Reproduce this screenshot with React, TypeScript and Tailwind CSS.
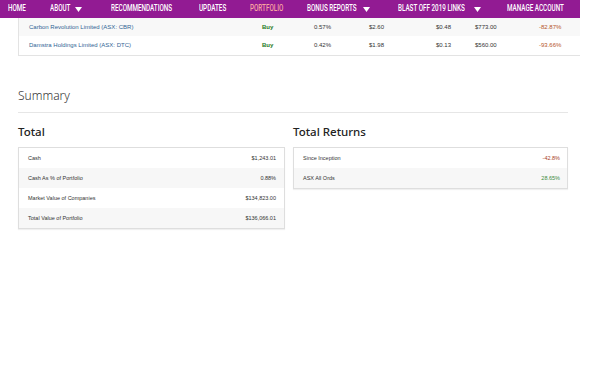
import React from "react";

const navItems = [
  { label: "HOME", ml: 8, w: 18 },
  { label: "ABOUT", ml: 24, w: 20, caret: true },
  { label: "RECOMMENDATIONS", ml: 29, w: 62 },
  { label: "UPDATES", ml: 26, w: 28 },
  { label: "PORTFOLIO", ml: 23, w: 35, active: true },
  { label: "BONUS REPORTS", ml: 22, w: 51, caret: true },
  { label: "BLAST OFF 2019 LINKS", ml: 28, w: 71, caret: true },
  { label: "MANAGE ACCOUNT", ml: 26, w: 60 },
];

const holdings = [
  { name: "Carbon Revolution Limited (ASX: CBR)", pct: "0.57%", buy: "$2.60", price: "$0.48", value: "$773.00", ret: "-82.87%" },
  { name: "Damstra Holdings Limited (ASX: DTC)", pct: "0.42%", buy: "$1.98", price: "$0.13", value: "$560.00", ret: "-93.66%" },
];

const totals = [
  { label: "Cash", value: "$1,243.01" },
  { label: "Cash As % of Portfolio", value: "0.88%" },
  { label: "Market Value of Companies", value: "$134,823.00" },
  { label: "Total Value of Portfolio", value: "$136,066.01" },
];

const returns = [
  { label: "Since Inception", value: "-42.8%", color: "text-[#a8411d]" },
  { label: "ASX All Ords", value: "28.65%", color: "text-[#3d8a3d]" },
];

function Caret() {
  return (
    <svg width="7" height="5" viewBox="0 0 7 5" className="ml-[5px] shrink-0">
      <path d="M0 0h7L3.5 5z" fill="#ffffff" />
    </svg>
  );
}

export default function App() {
  return (
    <div className="h-[382px] w-[600px] bg-white font-['Liberation_Sans',sans-serif] text-[#333]">
      {/* nav */}
      <div className="flex h-[18px] w-[580px] items-center overflow-hidden bg-[#921b93] font-['Roboto',sans-serif] text-[9px] font-medium">
        {navItems.map((item) => (
          <div key={item.label} className="flex shrink-0 items-center" style={{ marginLeft: item.ml }}>
            <span className="inline-block shrink-0" style={{ width: item.w }}>
              <span
                className={
                  "inline-block origin-left scale-x-[0.7] whitespace-nowrap " +
                  (item.active ? "text-[#f8a3a0]" : "text-white")
                }
              >
                {item.label}
              </span>
            </span>
            {item.caret && <Caret />}
          </div>
        ))}
      </div>

      {/* holdings rows */}
      <div className="ml-[18px] w-[562px] border-b border-l border-[#e3e3e3] text-[6px]">
        {holdings.map((h, i) => (
          <div
            key={h.name}
            className={
              "grid grid-cols-[243px_52px_55px_50px_56px_64px_1fr] items-center " +
              (i % 2 === 0 ? "h-[18px] bg-[#f8f8f8]" : "h-[19px] bg-white")
            }
          >
            <span className="pl-[10px] text-[#2f6495]">{h.name}</span>
            <span className="font-bold text-[#1d7a24]">Buy</span>
            <span>{h.pct}</span>
            <span>{h.buy}</span>
            <span className="pr-[24px] text-right">{h.price}</span>
            <span>{h.value}</span>
            <span className="pr-[20px] text-right text-[#b5532a]">{h.ret}</span>
          </div>
        ))}
      </div>

      {/* summary */}
      <div className="mx-[18px] mt-[31px] w-[550px]">
        <div className="border-b border-[#e6e6e6] pb-[7px] font-['Noto_Sans',sans-serif] text-[12px] font-light leading-[18px] text-[#333]">
          Summary
        </div>

        <div className="mt-[10px] flex gap-[8px]">
          <div className="w-[267px]">
            <div className="font-['Noto_Sans',sans-serif] text-[11.5px] font-medium leading-[18px] text-[#222]">Total</div>
            <div className="mt-[6px] border border-[#dedede] text-[5.5px] shadow-[0_1px_1px_rgba(0,0,0,0.06)]">
              {totals.map((t, i) => (
                <div
                  key={t.label}
                  className={
                    "flex h-[20px] items-center justify-between pl-[9px] pr-[8px] " +
                    (i % 2 === 1 ? "bg-[#f7f7f7]" : "bg-white")
                  }
                >
                  <span>{t.label}</span>
                  <span>{t.value}</span>
                </div>
              ))}
            </div>
          </div>

          <div className="w-[275px]">
            <div className="font-['Noto_Sans',sans-serif] text-[11.5px] font-medium leading-[18px] text-[#222]">Total Returns</div>
            <div className="mt-[6px] border border-[#dedede] text-[5.5px] shadow-[0_1px_1px_rgba(0,0,0,0.06)]">
              {returns.map((r, i) => (
                <div
                  key={r.label}
                  className={
                    "flex h-[20px] items-center justify-between pl-[9px] pr-[7px] " +
                    (i % 2 === 1 ? "bg-[#f7f7f7]" : "bg-white")
                  }
                >
                  <span>{r.label}</span>
                  <span className={r.color}>{r.value}</span>
                </div>
              ))}
            </div>
          </div>
        </div>
      </div>
    </div>
  );
}
